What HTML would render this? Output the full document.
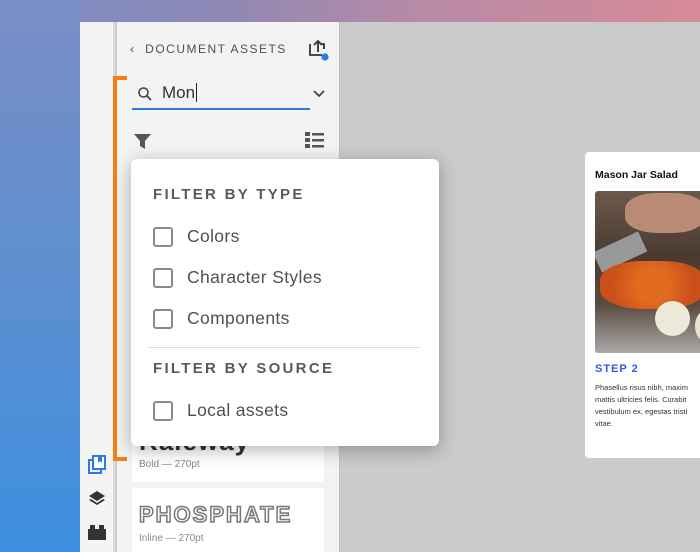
<!DOCTYPE html>
<html><head><style>
*{margin:0;padding:0;box-sizing:border-box}
body{width:700px;height:552px;overflow:hidden;position:relative;font-family:"Liberation Sans",sans-serif;
background:linear-gradient(90deg,#7b8ec6 0%,#8c88b6 30%,#b88aa6 60%,#d68a98 100%)}
.leftbg{position:absolute;left:0;top:0;width:80px;height:552px;background:linear-gradient(180deg,#7a8ec6 0%,#5e8fd0 50%,#3d8fe0 100%)}
.win{position:absolute;left:80px;top:22px;width:620px;height:530px;background:#cbcbcb}
.rail{position:absolute;left:0;top:0;width:35px;height:530px;background:#f4f4f4;border-right:2px solid #dcdcdc}
.panel{position:absolute;left:37px;top:0;width:223px;height:530px;background:#f3f3f3;border-right:1px solid #c0c0c0}
.abs{position:absolute}
.title{left:13px;top:20px;font-size:12px;letter-spacing:1.5px;color:#505050}
.card{background:#fff;border-radius:3px}
.pop{position:absolute;left:131px;top:159px;width:308px;height:287px;background:#fff;border-radius:6px;box-shadow:0 4px 18px rgba(0,0,0,.3)}
.h{position:absolute;left:22px;font-size:15px;font-weight:bold;letter-spacing:2.3px;color:#5a5a5a}
.cb{position:absolute;left:22px;width:20px;height:20px;border:2.5px solid #8a8a8a;border-radius:3px}
.lb{position:absolute;left:56px;font-size:17.5px;letter-spacing:.35px;color:#505050}
</style></head><body>
<div class="leftbg"></div>
<div class="win">
 <div class="rail">
  <svg class="abs" style="left:7px;top:433px" width="20" height="20" viewBox="0 0 20 20"><rect x="2" y="5" width="12" height="13" fill="none" stroke="#2d7be0" stroke-width="2"/><rect x="6" y="1" width="12" height="13" fill="#fff" stroke="#2d7be0" stroke-width="2"/><path d="M11 1v7l2-2 2 2V1z" fill="#2d7be0"/></svg>
  <svg class="abs" style="left:7px;top:467px" width="20" height="20" viewBox="0 0 20 20"><path d="M10 2l8 5-8 5-8-5z" fill="#333"/><path d="M2 11l8 5 8-5-2-1-6 4-6-4z" fill="#333"/></svg>
  <svg class="abs" style="left:7px;top:501px" width="20" height="18" viewBox="0 0 20 18"><rect x="1" y="6" width="18" height="11" fill="#333"/><rect x="3" y="2" width="5" height="5" fill="#333"/><rect x="12" y="2" width="5" height="5" fill="#333"/></svg>
 </div>
 <div class="panel">
  <div class="abs title">‹&nbsp; DOCUMENT ASSETS</div>
  <svg class="abs" style="left:189px;top:16px" width="24" height="24" viewBox="0 0 24 24"><path d="M4 6v11h12M12 14V3M8 7l4-4 4 4M15 6h3v5" fill="none" stroke="#333" stroke-width="1.8"/><circle cx="19" cy="19" r="3.6" fill="#2d7be0"/></svg>
  <div class="abs" style="left:15px;top:86px;width:178px;height:1.5px;background:#2d7be0"></div>
  <svg class="abs" style="left:20px;top:64px" width="16" height="16" viewBox="0 0 16 16"><circle cx="6.5" cy="6.5" r="4.5" fill="none" stroke="#444" stroke-width="1.6"/><path d="M10 10l4 4" stroke="#444" stroke-width="1.8"/></svg>
  <div class="abs" style="left:45px;top:61px;font-size:17px;color:#333">Mon<span style="border-left:1.5px solid #222;margin-left:1px"></span></div>
  <svg class="abs" style="left:196px;top:67px" width="12" height="10" viewBox="0 0 12 10"><path d="M1 2l5 5 5-5" fill="none" stroke="#444" stroke-width="1.8"/></svg>
  <svg class="abs" style="left:17px;top:111px" width="17" height="17" viewBox="0 0 17 17"><path d="M0 1h17l-6 7v8l-5-3V8z" fill="#555"/></svg>
  <svg class="abs" style="left:188px;top:110px" width="19" height="17" viewBox="0 0 19 17"><g fill="#555"><rect x="0" y="0" width="5" height="4"/><rect x="0" y="6" width="5" height="4"/><rect x="0" y="12" width="5" height="4"/><rect x="7" y="1" width="12" height="2.5"/><rect x="7" y="7" width="12" height="2.5"/><rect x="7" y="13" width="12" height="2.5"/></g></svg>
  <div class="abs card" style="left:15px;top:410px;width:192px;height:50px"></div>
  <div class="abs" style="left:22px;top:404px;font-size:26px;font-weight:bold;color:#333;letter-spacing:1px">Raleway</div>
  <div class="abs" style="left:22px;top:437px;font-size:10px;color:#888">Bold — 270pt</div>
  <div class="abs card" style="left:15px;top:466px;width:192px;height:64px"></div>
  <div class="abs" style="left:22px;top:480px;font-size:22px;font-weight:bold;color:#fff;-webkit-text-stroke:1.5px #777;letter-spacing:2px">PHOSPHATE</div>
  <div class="abs" style="left:22px;top:511px;font-size:10px;color:#888">Inline — 270pt</div>
 </div>
 <div class="abs" style="left:33px;top:54px;width:4px;height:385px;background:#f57f17"></div>
 <div class="abs" style="left:33px;top:54px;width:14px;height:4px;background:#f57f17"></div>
 <div class="abs" style="left:33px;top:435px;width:14px;height:4px;background:#f57f17"></div>
 <div class="abs" style="left:505px;top:130px;width:120px;height:306px;background:#fff;border-radius:4px">
  <div class="abs" style="left:10px;top:17px;font-size:10.5px;font-weight:bold;color:#111">Mason Jar Salad</div>
  <div class="abs" style="left:10px;top:39px;width:110px;height:162px;border-radius:3px;overflow:hidden;background:linear-gradient(180deg,#6b5a4c 0%,#4a3a30 40%,#5a4a40 70%,#aaa 100%)">
   <div class="abs" style="left:30px;top:2px;width:80px;height:40px;border-radius:40%;background:#b98a75"></div>
   <div class="abs" style="left:0;top:50px;width:50px;height:22px;background:#999;transform:rotate(-25deg)"></div>
   <div class="abs" style="left:5px;top:70px;width:105px;height:48px;border-radius:40%;background:radial-gradient(circle,#e06a20 30%,#c9501a 70%)"></div>
   <div class="abs" style="left:60px;top:110px;width:35px;height:35px;border-radius:50%;background:#eee8d8"></div>
   <div class="abs" style="left:100px;top:120px;width:20px;height:30px;border-radius:50%;background:#e8e2d2"></div>
  </div>
  <div class="abs" style="left:10px;top:211px;font-size:11px;font-weight:bold;color:#2d5be0;letter-spacing:1px">STEP 2</div>
  <div class="abs" style="left:10px;top:230px;width:130px;font-size:7.5px;line-height:12px;color:#333;white-space:nowrap">Phasellus risus nibh, maxim<br>mattis ultricies felis. Curabit<br>vestibulum ex, egestas tristi<br>vitae.</div>
 </div>
</div>
<div class="pop">
 <div class="h" style="top:27px">FILTER BY TYPE</div>
 <div class="cb" style="top:68px"></div><div class="lb" style="top:67px">Colors</div>
 <div class="cb" style="top:109px"></div><div class="lb" style="top:108px">Character Styles</div>
 <div class="cb" style="top:150px"></div><div class="lb" style="top:149px">Components</div>
 <div class="abs" style="left:18px;top:188px;width:271px;height:1px;background:#ddd"></div>
 <div class="h" style="top:201px">FILTER BY SOURCE</div>
 <div class="cb" style="top:242px"></div><div class="lb" style="top:241px">Local assets</div>
</div>
</body></html>
